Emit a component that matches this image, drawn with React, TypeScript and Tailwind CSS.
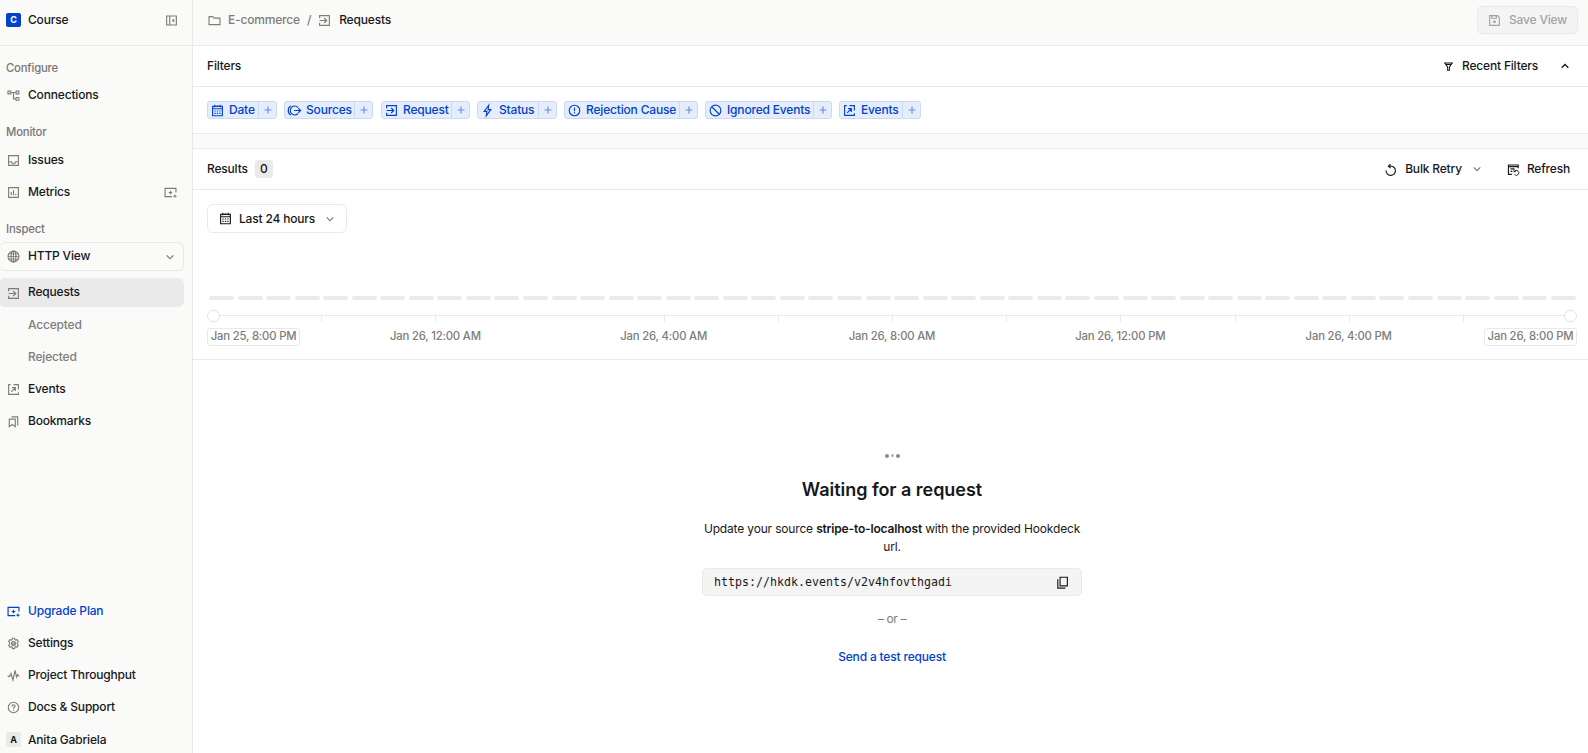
import type { ReactNode } from "react";

type IconName =
  | "collapse" | "connections" | "inbox" | "metrics" | "upgrade" | "globe" | "request"
  | "events" | "bookmarks" | "gear" | "pulse" | "help" | "folder" | "save" | "filter"
  | "calendar" | "sources" | "bolt" | "alert" | "ban" | "retry" | "refresh" | "copy"
  | "down" | "up";

const paths: Record<IconName, ReactNode> = {
  collapse: <><path d="M2 2.500h12v11H2zM5.800 2.500v11" /><path d="M11.300 5.500v5L8.300 8z" fill="currentColor" stroke="none" /></>,
  connections: <><path d="M1.200 2.600h3.400V6H1.200zM11.200 2.600h3.400V6h-3.400zM11.200 10.400h3.400v3.400h-3.400zM4.600 4.300h6.600M8 4.300v7.800h3.200" /></>,
  inbox: <><path d="M2 2h12v12H2z" /><path d="M2 9.600h3.400c.5 2.800 4.700 2.800 5.200 0H14" /></>,
  metrics: <><path d="M2 2h12v12H2z" /><path d="M5.200 7.500v4M8 5v6.500M10.800 9.600v1.900" /></>,
  upgrade: <><path d="M10 13H1.300V3h13.400v5" /><path d="M8 5.300 9 7.300 11 8 9 8.800 8 10.700 7 8.800 5 8 7 7.300z" fill="currentColor" stroke="none" /><path d="M13.500 9.800l.7 2 2 .7-2 .8-.7 1.900-.8-1.900-1.900-.8 1.900-.7z" fill="currentColor" stroke="none" /></>,
  globe: <><circle cx="8" cy="8" r="6.700" /><ellipse cx="8" cy="8" rx="3" ry="6.700" /><path d="M8 1.300v13.400M1.300 8h13.400M2.300 4.800h11.400M2.300 11.200h11.400" strokeWidth="1.100" /></>,
  request: <><path d="M2 5.200V2h12v12H2v-3.200" /><path d="M2 8h8.500M7.600 4.900 10.700 8l-3.100 3.100" /></>,
  events: <><path d="M4.500 2H2v12h12v-2.500M8 2h6v6" /><path d="M5.200 11 10 6M6.200 5.700h4.100v4.200" /></>,
  bookmarks: <><path d="M2.800 5h7.400v9.300L6.500 11.600l-3.700 2.700z" /><path d="M5.500 2.300h7.700v10.500" /></>,
  gear: <><path d="M6.700 1.500h2.600l.4 1.700 1.200.7 1.700-.5 1.300 2.200-1.200 1.300v1.900l1.200 1.300-1.300 2.200-1.700-.5-1.200.7-.4 1.800H6.700l-.4-1.800-1.200-.7-1.700.5-1.300-2.200 1.200-1.300V6.900L2.100 5.600l1.300-2.200 1.700.5 1.200-.7z" /><circle cx="8" cy="8" r="2.400" fill="currentColor" fillOpacity=".6" /></>,
  pulse: <path d="M.8 9h2.400l1.700-3.500 2.400 8L10 1.800l1.700 8.200 1.500-3 1 1.500h1" />,
  help: <><circle cx="8" cy="8" r="6.400" /><path d="M6.100 6.700C6.200 4 10 4.200 9.900 6.400 9.800 7.800 8 7.700 8 9.400M8 10.800V12" /></>,
  folder: <path d="M1.300 13V3.200h4.600L7.500 5h7.200v8z" />,
  save: <><path d="M2 2h9.800L14 4.200V14H2z" /><path d="M4.500 2.500v2.700h5.800V2.500" /><circle cx="8" cy="9.600" r="1.700" fill="currentColor" stroke="none" /></>,
  filter: <path d="M2.500 2.800h11L9.300 8.600v4.900H6.700V8.600zM4 5.200h8" strokeWidth="1.500" />,
  calendar: <><path d="M2 3h12v11.500H2zM2 5.800h12M4.700.8V4M11.300.8V4M8 1.500v2" /><path d="M4.200 8.600h1.600M7.200 8.600h1.600M10.200 8.600h1.600M4.200 11.500h1.600M7.200 11.500h1.600M10.200 11.500h1.600" strokeWidth="1.500" /></>,
  sources: <><path d="M3.600 2.400C-.8 4-.8 12 3.600 13.600" /><path d="M12.300 4.300a5.500 5.500 0 1 0 0 7.400M7.500 8h8M12.700 5.200 15.500 8l-2.800 2.800" /></>,
  bolt: <path d="M9.500 1.500 3.900 9.100h3.300L6.500 14.500l5.600-7.600H8.800z" />,
  alert: <><circle cx="8" cy="8" r="6.500" /><path d="M8 4.300v4.600M8 10.300v1.500" /></>,
  ban: <><circle cx="8" cy="8" r="6.600" /><path d="m3.400 3.400 9.200 9.200" /></>,
  retry: <><path d="M1.500 8.500a6.200 6.200 0 1 0 6.200-5.700H4.800" strokeWidth="1.500" /><path d="M7.300.3 4.500 2.900l2.800 2.700" strokeWidth="1.500" /></>,
  refresh: <><path d="M6 14H1.800V2.500h12v4M1.800 4.500h12M4.300 7.300h5M4.300 10.300h2.200" /><path d="M8.500 8v2.500H11M9 10.200a3.100 3.100 0 1 1 .2 4" strokeWidth="1.100" /></>,
  copy: <><path d="M5 1.500h9v10.700H5z" /><path d="M2.200 4v11h9.300" /></>,
  down: <path d="M4.200 6.200 8 10l3.800-3.800" strokeWidth="1.400" />,
  up: <path d="M4.200 10 8 6.200l3.800 3.800" strokeWidth="1.500" />,
};

function Icon({ name, className = "size-3.5" }: { name: IconName; className?: string }) {
  return (
    <svg viewBox="0 0 16 16" fill="none" stroke="currentColor" strokeWidth="1.400" className={`shrink-0 overflow-visible ${className}`}>
      {paths[name]}
    </svg>
  );
}

function NavItem({ icon, label, trailing, className = "" }: { icon?: IconName; label: string; trailing?: IconName; className?: string }) {
  return (
    <div className={`flex h-8 items-center pl-[7px] pr-[7px] ${className}`}>
      {icon ? <Icon name={icon} className="mt-px size-[13px] text-[#7d7d7d]" /> : <span className="w-[13px]" />}
      <span className="ml-2 flex-1">{label}</span>
      {trailing && <Icon name={trailing} className="mt-px size-[13px] text-[#7d7d7d]" />}
    </div>
  );
}

function SectionLabel({ children, className }: { children: ReactNode; className: string }) {
  return <div className={`flex h-5 items-center pl-1.5 text-[11.300px] text-[#767676] ${className}`}>{children}</div>;
}

function Sidebar() {
  return (
    <aside className="flex w-[193px] shrink-0 flex-col border-r border-[#e9e9e9] bg-[#fafaf9]">
      <div className="flex h-[46px] shrink-0 items-start border-b border-[#e9e9e9] pt-[11px] pl-1.5 pr-[14px]">
        <span className="mt-0.5 flex h-3.5 w-[15px] items-center justify-center rounded-[2px] bg-[#0042cc] text-[9px] font-bold text-white">C</span>
        <span className="ml-[7px] flex-1 leading-[18px]">Course</span>
        <Icon name="collapse" className="mt-[3px] size-[13px] text-[#7d7d7d]" />
      </div>
      <nav className="flex flex-1 flex-col pr-2">
        <SectionLabel className="mt-[12px]">Configure</SectionLabel>
        <NavItem icon="connections" label="Connections" className="mt-[1px]" />
        <SectionLabel className="mt-[11px]">Monitor</SectionLabel>
        <NavItem icon="inbox" label="Issues" className="mt-[2px]" />
        <NavItem icon="metrics" label="Metrics" trailing="upgrade" />
        <SectionLabel className="mt-[11px]">Inspect</SectionLabel>
        <div className="-ml-px mt-[3px] flex h-[29px] items-center rounded-md border border-[#e9e9e9] pl-[7px] pr-1.5">
          <Icon name="globe" className="size-[13px] text-[#7d7d7d]" />
          <span className="-mt-0.5 ml-2 flex-1">HTTP View</span>
          <Icon name="down" className="size-3.5 text-[#7d7d7d]" />
        </div>
        <div className="-ml-px mt-[7px] flex h-[29px] items-center rounded-md bg-[#eaeaea] pl-2">
          <Icon name="request" className="mt-px size-[13px] text-[#7d7d7d]" />
          <span className="-mt-0.5 ml-2">Requests</span>
        </div>
        <NavItem label="Accepted" className="mt-[2px] text-[#7d7d7d]" />
        <NavItem label="Rejected" className="text-[#7d7d7d]" />
        <NavItem icon="events" label="Events" />
        <NavItem icon="bookmarks" label="Bookmarks" />
        <div className="mt-auto flex h-8 items-center pl-[7px] text-[#0042cc]">
          <Icon name="upgrade" className="mt-px size-[13px]" />
          <span className="ml-2">Upgrade Plan</span>
        </div>
        <NavItem icon="gear" label="Settings" />
        <NavItem icon="pulse" label="Project Throughput" />
        <NavItem icon="help" label="Docs &amp; Support" />
        <div className="flex h-[30px] items-center pl-1.5 pt-[3px]">
          <span className="flex size-[15px] items-center justify-center rounded-[2px] bg-[#eaeaea] text-[9px] font-bold">A</span>
          <span className="ml-[7px]">Anita Gabriela</span>
        </div>
      </nav>
    </aside>
  );
}

const chips: { icon: IconName; label: string; box: string }[] = [
  { icon: "calendar", label: "Date", box: "w-[70px] mr-[7px]" },
  { icon: "sources", label: "Sources", box: "w-[89px] mr-2" },
  { icon: "request", label: "Request", box: "w-[89px] mr-[7px]" },
  { icon: "bolt", label: "Status", box: "w-[80px] mr-[7px]" },
  { icon: "alert", label: "Rejection Cause", box: "w-[134px] mr-[7px]" },
  { icon: "ban", label: "Ignored Events", box: "w-[127px] mr-[7px]" },
  { icon: "events", label: "Events", box: "w-[82px]" },
];

function Filters() {
  return (
    <>
      <div className="flex h-[41px] items-center border-b border-[#e9e9e9] pl-3.5 pr-4">
        <span className="flex-1">Filters</span>
        <Icon name="filter" className="size-[11px]" />
        <span className="ml-2 w-[77px] whitespace-nowrap">Recent Filters</span>
        <Icon name="up" className="ml-[19px] size-3.5" />
      </div>
      <div className="flex h-[47px] items-center border-b border-[#e9e9e9] pl-3.5">
        {chips.map((chip) => (
          <div key={chip.label} className={`flex h-[18px] shrink-0 items-center rounded-[3px] border border-[#cbd9f6] bg-[#e5ecfa] text-[#0042cc] ${chip.box}`}>
            <Icon name={chip.icon} className="ml-[3px] size-[13px]" />
            <span className="ml-[5px] flex-1 whitespace-nowrap">{chip.label}</span>
            <span className="flex h-full w-[18px] items-center justify-center border-l border-[#cbd9f6]">
              <svg viewBox="0 0 8 8" className="size-2" stroke="#6a91e2" strokeWidth="1.2"><path d="M4 .5v7M.5 4h7" /></svg>
            </span>
          </div>
        ))}
      </div>
    </>
  );
}

const bars = Array.from({ length: 48 }, (_, i) => i);
const segments = Array.from({ length: 12 }, (_, i) => i);
const unmarked = [0, 3];
const labels = ["Jan 26, 12:00 AM", "Jan 26, 4:00 AM", "Jan 26, 8:00 AM", "Jan 26, 12:00 PM", "Jan 26, 4:00 PM"];

function Timeline() {
  return (
    <div className="h-[170px] shrink-0 border-b border-[#e9e9e9] pl-3.5 pr-[11px] pt-3.5 text-[#7d7d7d]">
      <button className="flex h-[29px] w-[140px] items-center rounded-md border border-[#e9e9e9] pl-[11px] font-medium text-[#17181a]">
        <Icon name="calendar" className="size-[13px]" />
        <span className="ml-[7px] flex-1 text-left">Last 24 hours</span>
        <Icon name="down" className="mr-[9px] size-3.5 text-[#7d7d7d]" />
      </button>
      <div className="mt-[63px] flex justify-between pl-0.5 pr-px">
        {bars.map((i) => <span key={i} className="h-1 w-[25px] rounded-sm bg-[#ebebeb]" />)}
      </div>
      <div className="relative mt-[15px] flex h-[7px] border-t border-[#e9e9e9]">
        {segments.map((i) => <span key={i} className={`flex-1 border-l ${unmarked.includes(i) ? "border-transparent" : "border-[#e9e9e9]"}`} />)}
        <span className="absolute -top-1.5 left-0 h-3 w-[13px] rounded-full border border-[#e4e4e4] bg-white" />
        <span className="absolute -top-1.5 right-0 h-3 w-[13px] rounded-full border border-[#e4e4e4] bg-white" />
      </div>
      <div className="mt-1.5 flex h-[18px] items-center text-[11.300px]">
        <div className="flex flex-1 basis-0"><span className="flex h-[18px] w-[93px] shrink-0 items-center justify-center rounded-[3px] border border-[#e9e9e9] pb-0.5">Jan 25, 8:00 PM</span></div>
        {labels.map((label) => <span key={label} className="flex-[2] basis-0 pb-0.5 text-center">{label}</span>)}
        <div className="flex flex-1 basis-0 justify-end"><span className="flex h-[18px] w-[93px] shrink-0 items-center justify-center rounded-[3px] border border-[#e9e9e9] pb-0.5">Jan 26, 8:00 PM</span></div>
      </div>
    </div>
  );
}

function EmptyState() {
  return (
    <div className="flex flex-1 flex-col items-center pl-[3px]">
      <div className="mt-[93px] flex h-[5px] items-center gap-0.5">
        <span className="size-1 rounded-full bg-[#8a8a8a]" />
        <span className="size-[3px] rounded-full bg-[#b0b0b0]" />
        <span className="size-1 rounded-full bg-[#8a8a8a]" />
      </div>
      <h1 className="mt-5 text-[18px] leading-6 font-semibold tracking-[-0.03px]">Waiting for a request</h1>
      <p className="mt-[18px] w-[382px] text-center leading-[18px] font-normal tracking-[-0.17px]">
        Update your source <b className="font-semibold">stripe-to-localhost</b> with the provided Hookdeck url.
      </p>
      <div className="mt-3 flex h-7 w-[380px] items-center rounded-[5px] border border-[#e9e9e9] bg-[#f4f4f4] pl-[11px] pr-3">
        <span className="flex-1 font-['DejaVu_Sans_Mono',monospace] text-[11.600px] font-normal tracking-[0.02px]">https://hkdk.events/v2v4hfovthgadi</span>
        <Icon name="copy" className="size-[13px]" />
      </div>
      <span className="mt-[14px] leading-[18px] font-normal tracking-[-0.4px] text-[#7d7d7d]">– or –</span>
      <a className="mt-5 leading-[18px] text-[#0042cc]">Send a test request</a>
    </div>
  );
}

export default function App() {
  return (
    <div className="flex h-[753px] w-full overflow-hidden bg-white font-[Inter,sans-serif] text-[12px] leading-[18px] font-medium tracking-[-0.18px] text-[#17181a]">
      <Sidebar />
      <main className="flex min-w-0 flex-1 flex-col">
        <header className="flex h-[46px] shrink-0 items-start border-b border-[#e9e9e9] bg-[#fafaf9] pl-3.5 pr-2.5">
          <div className="mt-[11px] flex flex-1 items-center">
            <Icon name="folder" className="ml-px mt-px size-[13px] text-[#7d7d7d]" />
            <span className="ml-[7px] text-[#7d7d7d]">E-commerce</span>
            <span className="mx-[7px] text-[#7d7d7d]">/</span>
            <Icon name="request" className="mt-px size-[13px] text-[#7d7d7d]" />
            <span className="ml-2">Requests</span>
          </div>
          <button className="mt-1.5 flex h-7 w-[101px] items-center rounded-[5px] border border-[#e9e9e9] bg-[#f4f4f4] pl-2.5 font-medium text-[#a3a3a3]">
            <Icon name="save" className="mt-px size-[13px]" />
            <span className="ml-2">Save View</span>
          </button>
        </header>
        <Filters />
        <div className="h-[15px] shrink-0 border-b border-[#e9e9e9] bg-[#fafaf9]" />
        <div className="flex h-[41px] shrink-0 items-center border-b border-[#e9e9e9] pl-3.5 pr-[18px]">
          <span>Results</span>
          <span className="ml-[7px] flex size-[18px] items-center justify-center rounded-[3px] bg-[#eaeaea]">0</span>
          <span className="flex-1" />
          <Icon name="retry" className="mt-0.5 size-3" />
          <span className="ml-2">Bulk Retry</span>
          <Icon name="down" className="ml-2 size-3.5 text-[#7d7d7d]" />
          <Icon name="refresh" className="ml-[23px] mt-px size-[13px]" />
          <span className="ml-[7px]">Refresh</span>
        </div>
        <Timeline />
        <EmptyState />
      </main>
    </div>
  );
}
